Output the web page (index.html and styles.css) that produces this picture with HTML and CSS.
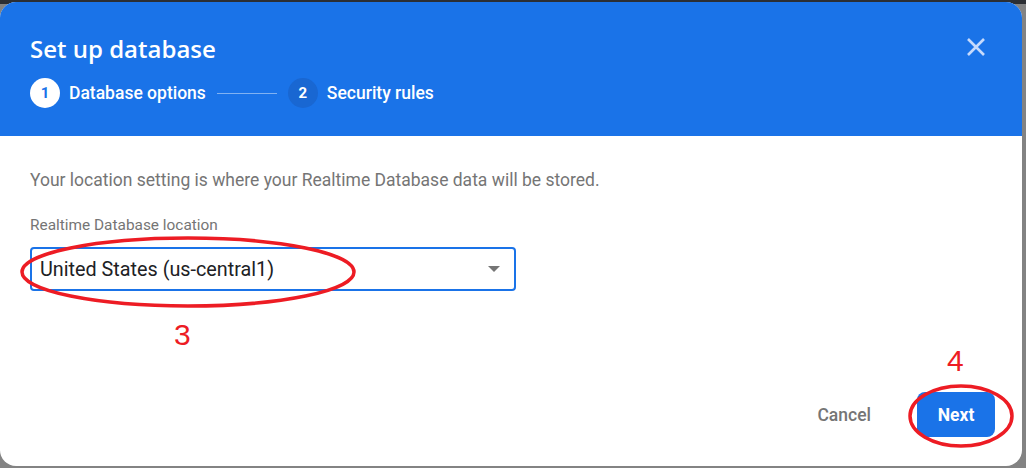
FILE: index.html
```html
<!DOCTYPE html>
<html>
<head>
<meta charset="utf-8">
<link rel="stylesheet" href="styles.css">
</head>
<body>
<div class="stage">
  <div class="dialog">
    <div class="header">
      <div class="title-row">
        <h1 class="title">Set up database</h1>
        <button class="close" aria-label="Close">
          <svg width="20" height="20" viewBox="0 0 20 20"><path d="M2 2 L18 18 M18 2 L2 18" stroke="#c6dafc" stroke-width="2.6" fill="none"/></svg>
        </button>
      </div>
      <div class="steps">
        <div class="step active"><span class="num">1</span><span class="step-label">Database options</span></div>
        <div class="connector"></div>
        <div class="step"><span class="num">2</span><span class="step-label">Security rules</span></div>
      </div>
    </div>
    <div class="content">
      <p class="desc">Your location setting is where your Realtime Database data will be stored.</p>
      <div class="field">
        <div class="field-label">Realtime Database location</div>
        <div class="select">
          <span class="select-value">United States (us-central1)</span>
          <span class="arrow"></span>
        </div>
      </div>
    </div>
    <div class="actions">
      <button class="btn-text">Cancel</button>
      <button class="btn-primary">Next</button>
    </div>

    <svg class="mark mark-select" width="340" height="76" viewBox="0 0 340 76"><ellipse cx="170" cy="38" rx="166" ry="34" fill="none" stroke="#ed1c24" stroke-width="3.5"/></svg>
    <span class="mark-num num3">3</span>
    <svg class="mark mark-next" width="110" height="68" viewBox="0 0 110 68"><ellipse cx="55" cy="34" rx="51" ry="30" fill="none" stroke="#ed1c24" stroke-width="3.5"/></svg>
    <span class="mark-num num4">4</span>
  </div>
</div>
</body>
</html>
```
FILE: styles.css
```css
html, body {
  margin: 0;
  padding: 0;
}
body {
  background: #838383;
  font-family: Roboto, "Liberation Sans", sans-serif;
}
.stage {
  width: 1026px;
  height: 468px;
  background: linear-gradient(#2b2e33 0, #2b2e33 4px, #838383 4px);
  padding-top: 2px;
  box-sizing: border-box;
}
.dialog {
  position: relative;
  width: 1022px;
  height: 464px;
  background: #fff;
  border-radius: 16px;
  overflow: hidden;
  display: flex;
  flex-direction: column;
}
.header {
  background: #1a73e8;
  height: 134px;
  box-sizing: border-box;
  padding: 32px 30px 0 30px;
  color: #fff;
}
.title-row {
  display: flex;
  align-items: center;
  justify-content: space-between;
}
.title {
  margin: 0;
  font-family: "Open Sans", Roboto, sans-serif;
  font-weight: 600;
  font-size: 24px;
  line-height: 30px;
  letter-spacing: 0;
}
.close {
  background: none;
  border: 0;
  padding: 0;
  margin-right: 6px;
  margin-top: -4px;
  width: 20px;
  height: 20px;
  display: flex;
}
.steps {
  display: flex;
  align-items: center;
  margin-top: 14px;
}
.step {
  display: flex;
  align-items: center;
  gap: 9px;
}
.num {
  width: 30px;
  height: 30px;
  border-radius: 50%;
  background: #1967d2;
  color: #fff;
  font-size: 15px;
  font-weight: 700;
  display: flex;
  align-items: center;
  justify-content: center;
}
.step.active .num {
  background: #fff;
  color: #1a73e8;
}
.step-label {
  font-size: 17.5px;
  font-weight: 500;
  color: #fff;
}
.connector {
  width: 60px;
  height: 1px;
  background: rgba(255,255,255,0.45);
  margin: 0 11px;
}
.content {
  padding: 0 30px;
  flex: 1;
}
.desc {
  margin: 32px 0 0;
  font-size: 17.5px;
  color: #757575;
  line-height: 24px;
}
.field {
  margin-top: 23px;
}
.field-label {
  font-size: 15.4px;
  color: #757575;
  line-height: 20px;
}
.select {
  margin-top: 12px;
  width: 486px;
  height: 44px;
  box-sizing: border-box;
  border: 2px solid #1a73e8;
  border-radius: 4px;
  display: flex;
  align-items: center;
  justify-content: space-between;
  padding: 0 14px 0 8px;
}
.select-value {
  font-size: 19.8px;
  color: #202124;
}
.arrow {
  width: 0;
  height: 0;
  border-left: 6px solid transparent;
  border-right: 6px solid transparent;
  border-top: 6px solid #757575;
}
.actions {
  display: flex;
  justify-content: flex-end;
  align-items: center;
  gap: 24px;
  padding: 0 27px 29px 0;
}
.btn-text {
  background: none;
  border: 0;
  font-family: Roboto, sans-serif;
  font-size: 17.5px;
  font-weight: 500;
  color: #757575;
  padding: 0 22px;
  height: 45px;
}
.btn-primary {
  background: #1a73e8;
  color: #fff;
  border: 0;
  border-radius: 8px;
  font-family: Roboto, sans-serif;
  font-size: 17.5px;
  font-weight: 700;
  width: 78px;
  height: 45px;
}
.mark {
  position: absolute;
}
.mark-select {
  left: 18px;
  top: 232px;
}
.mark-next {
  left: 906px;
  top: 380px;
}
.mark-num {
  position: absolute;
  color: #ed1c24;
  font-family: "Liberation Sans", Arial, sans-serif;
  font-size: 30px;
  line-height: 30px;
}
.num3 {
  left: 174px;
  top: 318px;
}
.num4 {
  left: 947px;
  top: 344px;
}
```
